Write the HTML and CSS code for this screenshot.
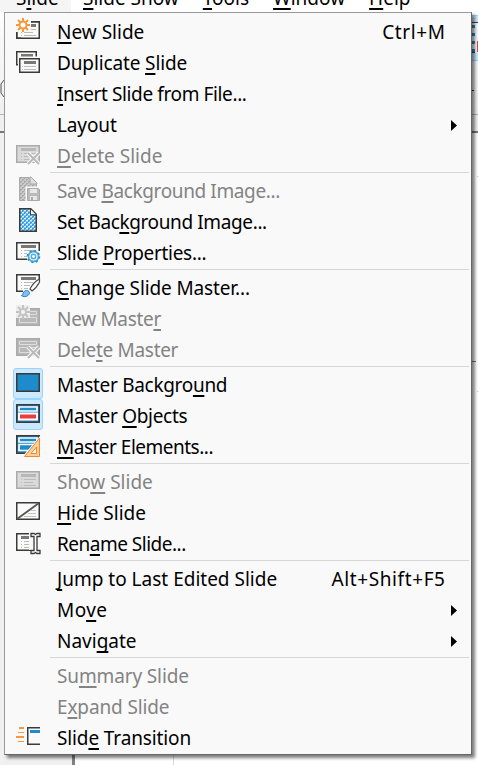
FILE: index.html
```
<!DOCTYPE html>
<html lang="en"><head><meta charset="utf-8"><title>Slide menu</title><link rel="stylesheet" href="styles.css"></head>
<body>
<div class="toolbar-edge"></div>
<div class="ruler-edge"></div>
<div class="workspace"><div class="panel"></div><div class="canvas"></div></div>
<svg class="behind" width="478" height="765" shape-rendering="crispEdges">
<rect x="467" y="15" width="11" height="46" fill="#cce8ff"/><path d="M467 15.5h11M467 60.5h11" stroke="#99d1ff"/>
<rect x="471" y="22" width="7" height="31" fill="#f3f8fc"/><path d="M471 22.5h7M471 52.5h4" stroke="#3a3a38"/><path d="M473.500 25v28" stroke="#1e8bcd" stroke-width="3" stroke-dasharray="3 5"/><rect x="477" y="41" width="1" height="11" fill="#ed3d3b"/>
<path d="M471 90.500h3" stroke="#222"/><path d="M477 176.500h1M477 391.500h1" stroke="#bbb"/><path d="M472 361.500h4" stroke="#777"/>
<path d="M4 80l-3 4v9l3 4" fill="none" stroke="#555" shape-rendering="auto"/>
</svg>
<nav class="menubar"><span class="active">S<u>l</u>ide</span><span><u>S</u>lide Show</span><span><u>T</u>ools</span><span><u>W</u>indow</span><span><u>H</u>elp</span></nav>
<main class="menu">
<div class="item"><i class="icon"><svg viewBox="0 0 24 24"><use href="#slide"/><path d="M0 0h15v14H0z" fill="#f9f9f9"/><path d="M.75 14v6.250H5M15 3.750h8" stroke="#3a3a38" stroke-width="1.500" fill="none"/><path d="M15 6h5v3h-5z" fill="#797774"/><path d="M7 0v14M0 7h14M2 2l10 10M12 2L2 12" stroke="#f7983d" stroke-width="2"/><circle cx="7" cy="7" r="3.500" fill="#fff" stroke="#f7983d" stroke-width="2"/></svg></i><span><u>N</u>ew Slide</span><span class="key">Ctrl+M</span></div>
<div class="item"><i class="icon"><svg viewBox="0 0 24 24"><path d="M.75 2.750h19.500v13H.75z" fill="#fafafa" stroke="#3a3a38" stroke-width="1.500"/><path d="M5 5h12v3H5z" fill="#797774"/><path d="M2 7.500h22V24H2z" fill="#f9f9f9"/><path d="M3.750 9.750h19.500v13.500H3.750z" fill="#fafafa" stroke="#3a3a38" stroke-width="1.500"/><path d="M8 12h12v3H8z" fill="#797774"/><path d="M6 17.500h1m1 0h12M6 20.500h1m1 0h12" stroke="#bbb"/></svg></i><span class="snug">Duplicate <u>S</u>lide</span></div>
<div class="item"><i class="icon"></i><span class="tighter"><u>I</u>nsert Slide from File...</span></div>
<div class="item"><i class="icon"></i><span class="snug">Layout</span><b class="arrow"></b></div>
<div class="item disabled"><i class="icon"><svg viewBox="0 0 24 24"><use href="#gslide"/><use href="#cross"/></svg></i><span><u>D</u>elete Slide</span></div>
<div class="separator"></div>
<div class="item disabled"><i class="icon"><svg viewBox="0 0 24 24"><path d="M3.500.5h11l6 6v17h-17z" fill="url(#gdots)" stroke="#aaa"/><path d="M14 0v7h7V6l-6-6z" fill="#ddd" stroke="#aaa"/><path d="M9.500 9.500H24V24H9.500z" fill="#f9f9f9"/><path d="M11.500 11.500h11l1 1v11h-12z" fill="#bbb" stroke="#aaa"/><path d="M14 12h7v4h-7zM14 19h7v4h-7z" fill="#e8e8e8"/><path d="M15 20h2v3h-2z" fill="#aaa"/></svg></i><span class="tighter">Save <u>B</u>ackground Image...</span></div>
<div class="item"><i class="icon"><svg viewBox="0 0 24 24"><path d="M3.750.75h11l5.500 5.500v17H3.750z" fill="url(#dots)" stroke="#3a3a38" stroke-width="1.500"/><path d="M14.500.75v6h6z" fill="#fafafa" stroke="#3a3a38"/></svg></i><span class="tighter">Set Bac<u>k</u>ground Image...</span></div>
<div class="item"><i class="icon"><svg viewBox="0 0 24 24"><use href="#slide"/><path d="M11 12h13v12H11z" fill="#f9f9f9"/><circle cx="17.500" cy="17.500" r="5" fill="#fff" stroke="#4fa8dc" stroke-width="1.800"/><circle cx="17.500" cy="17.500" r="6" fill="none" stroke="#1e8bcd" stroke-width="1.500" stroke-dasharray="2 2.700"/><circle cx="17.500" cy="17.500" r="2.200" fill="#fff" stroke="#4fa8dc" stroke-width="1.500"/></svg></i><span class="tight">Slide <u>P</u>roperties...</span></div>
<div class="separator"></div>
<div class="item"><i class="icon"><svg viewBox="0 0 24 24"><path d="M23.250 7V.75H.75v16.500H7" fill="#fafafa" stroke="#3a3a38" stroke-width="1.500"/><path d="M5 3h15v3H5z" fill="#797774"/><path d="M5 8.500h1m2 0h9M5 11.500h1m2 0h6M5 14.500h1m2 0h4" stroke="#bbb"/><path d="M23.500 5c-4 2-8 7-9.500 10l2 2c3-2 6-6 7.500-9z" fill="#fff" stroke="#4a4a48" stroke-width="1.200"/><path d="M5.500 21.500c2 0 1-5 5-5 3 0 4 3 1.500 5-2 1.500-5 1.500-6.500 0z" fill="#83beec" stroke="#1e7fc8"/></svg></i><span class="snug"><u>C</u>hange Slide Master...</span></div>
<div class="item disabled"><i class="icon"><svg viewBox="0 0 24 24"><use href="#gmaster"/><path d="M0 0h14v13H0z" fill="#eee"/><path d="M7 0v14M0 7h14M2 2l10 10M12 2L2 12" stroke="#c2c2c2" stroke-width="2"/><circle cx="7" cy="7" r="3" fill="#f5f5f5" stroke="#c6c6c6" stroke-width="2"/></svg></i><span class="tight">New Maste<u>r</u></span></div>
<div class="item disabled"><i class="icon"><svg viewBox="0 0 24 24"><g transform="translate(0 -1)"><use href="#gmaster"/></g><use href="#cross"/></svg></i><span class="tight">Dele<u>t</u>e Master</span></div>
<div class="separator"></div>
<div class="item checked"><i class="icon"><svg viewBox="0 0 24 24"><use href="#master"/></svg></i><span class="tight">Master Backgro<u>u</u>nd</span></div>
<div class="item checked"><i class="icon"><svg viewBox="0 0 24 24"><use href="#master"/><path d="M3 5h18v4H3z" fill="#1e8bcd" stroke="#fff" stroke-width="1.700"/><path d="M3 11.500h18v6H3z" fill="#ed3d3b" stroke="#fff" stroke-width="2"/></svg></i><span class="tight">Master <u>O</u>bjects</span></div>
<div class="item"><i class="icon"><svg viewBox="0 0 24 24"><use href="#master"/><path d="M3 5h18v4H3zM3 11.500h14v6H3z" fill="#1e8bcd" stroke="#fff" stroke-width="1.700"/><path d="M24 3v21H6z" fill="#f9f9f9"/><path d="M23.500 5v18.500H8.500z" fill="#fbd09a" stroke="#ee8a2c"/><path d="M20.500 14v6.500H15z" fill="#f9f9f9" stroke="#ee8a2c"/></svg></i><span class="tightest"><u>M</u>aster Elements...</span></div>
<div class="separator"></div>
<div class="item disabled"><i class="icon"><svg viewBox="0 0 24 24"><use href="#gslide"/></svg></i><span>Sho<u>w</u> Slide</span></div>
<div class="item"><i class="icon"><svg viewBox="0 0 24 24"><path d="M.75 3.750h22.500v16.500H.75z" fill="#fafafa" stroke="#3a3a38" stroke-width="1.500"/><path d="M15 11.500h5M12 14.500h8M8 17.500h12" stroke="#c4c4c4"/><path d="M1 20L23 4" stroke="#555" stroke-width="1.800"/></svg></i><span><u>H</u>ide Slide</span></div>
<div class="item"><i class="icon"><svg viewBox="0 0 24 24"><use href="#slide"/><path d="M13 2h11v22H16v-4h-3z" fill="#f9f9f9"/><path d="M15 3.500h3l1.500 1 1.500-1h3v3h-3v14h3v3h-3l-1.500-1-1.500 1h-3v-3h3v-14h-3z" fill="#fff" stroke="#3a3a38" stroke-width="1.300"/></svg></i><span class="tightest">Ren<u>a</u>me Slide...</span></div>
<div class="separator"></div>
<div class="item"><i class="icon"></i><span><u>J</u>ump to Last Edited Slide</span><span class="key">Alt+Shift+F5</span></div>
<div class="item"><i class="icon"></i><span class="loose">Mo<u>v</u>e</span><b class="arrow"></b></div>
<div class="item"><i class="icon"></i><span>Navi<u>g</u>ate</span><b class="arrow"></b></div>
<div class="separator"></div>
<div class="item disabled"><i class="icon"></i><span class="snug">Su<u>m</u>mary Slide</span></div>
<div class="item disabled"><i class="icon"></i><span class="snug">E<u>x</u>pand Slide</span></div>
<div class="item"><i class="icon"><svg viewBox="0 0 24 24"><path d="M24 3.750H11.750v16.500H24" fill="none" stroke="#3a3a38" stroke-width="1.500"/><path d="M14 6h10v3H14z" fill="#1e8bcd"/><path d="M3 4h5M0 13h8" stroke="#f7983d" stroke-width="2"/><path d="M2 8.500h6M2 17.500h6" stroke="#f7983d"/></svg></i><span class="snug">Slid<u>e</u> Transition</span></div>
</main>
<svg width="0" height="0" class="defs"><defs>
<pattern id="dots" width="4" height="4" patternUnits="userSpaceOnUse"><rect width="4" height="4" fill="#83c5ee"/><path d="M0 0h2v1H1v1H0zM2 2h2v1H3v1H2z" fill="#3b9cd8"/><path d="M2 0h2v1H2zM0 2h2v1H0z" fill="#d9effc"/></pattern>
<pattern id="gdots" width="4" height="4" patternUnits="userSpaceOnUse"><rect width="4" height="4" fill="#c8c8c8"/><path d="M0 0h2v1H1v1H0zM2 2h2v1H3v1H2z" fill="#aaa"/></pattern>
<g id="slide"><path d="M.75 3.750h22.500v16.500H.75z" fill="#fafafa" stroke="#3a3a38" stroke-width="1.500"/><path d="M5 6h15v3H5z" fill="#797774"/><path d="M5 11.500h1m2 0h12M5 14.500h1m2 0h9M5 17.500h1m2 0h12" stroke="#bbb"/></g>
<g id="gslide"><path d="M.75 3.750h22.500v16.500H.75z" fill="#dadada" stroke="#aaa" stroke-width="1.500"/><path d="M5 6h15v3H5z" fill="#b8b8b8"/><path d="M5 11.500h1m2 0h12M5 14.500h1m2 0h9M5 17.500h1m2 0h12" stroke="#bbb"/></g>
<g id="gmaster"><path d="M.75 3.750h22.500v16.500H.75z" fill="#b8b8b8" stroke="#aaa" stroke-width="1.500"/><path d="M3.500 6.500h17v3h-17zM3.500 12.500h17v5h-17z" fill="#b8b8b8" stroke="#ddd"/></g>
<g id="master"><path d="M.75 2.750h22.500v17.500H.75z" fill="#1e8bcd" stroke="#3a3a38" stroke-width="1.500"/></g>
<g id="cross"><path d="M12 11l11 11M23 11L12 22" stroke="#f9f9f9" stroke-width="4"/><path d="M12 11l11 11M23 11L12 22" stroke="#b9b9b9" stroke-width="2"/></g>
</defs></svg>
</body></html>
```
FILE: styles.css
```
*{box-sizing:border-box}
body{margin:0;width:478px;height:765px;overflow:hidden;position:relative;background:#fff;font:19px/31px "Noto Sans","Open Sans",sans-serif;color:#000;display:flex;flex-direction:column}
.toolbar-edge{height:115px;flex:none;background:linear-gradient(#fff 0,#fff 12px,#f8f8f8 40px,#f0f0f0 114px);border-bottom:1px solid #b5b5b5}
.ruler-edge{height:18px;flex:none;background:#f0f0f0;border-bottom:2px solid #777}
.workspace{flex:1;display:flex}
.panel{width:75px;background:#f0f0f0;border-right:3px solid #808080}
.canvas{width:99px;border-right:1px solid #d8d8d8}
.behind{position:absolute;left:0;top:0}
.defs{position:absolute}
.menubar{position:absolute;left:0;top:-17px;display:flex;height:29px;width:478px;white-space:nowrap}
.menubar span{padding:0 12px;line-height:31px}
.menubar .active{background:#f5f5f5;width:71px;padding-left:16px;padding-right:0}
u{text-decoration:underline;text-decoration-thickness:2px;text-underline-offset:3px;text-decoration-skip-ink:none}
.menu{position:absolute;left:4px;top:12px;width:468px;height:743px;background:#f9f9f9;border:1px solid #999;border-right-color:#666;border-bottom-color:#666;padding-top:4px;box-shadow:3px 3px 3px rgba(0,0,0,.5)}
.item{height:31px;display:flex;align-items:center;padding:0 26px 0 8px;white-space:pre}
.icon{width:30px;height:31px;margin:-4px 14px 0 0;flex:none;padding:3px;border:0 solid #99d1ff}
.icon svg{display:block;width:24px;height:24px;overflow:visible}
.checked .icon{background:#cce8ff;border-width:1px;border-radius:3px;padding:2px}
.key{margin-left:auto;margin-right:-.6px;letter-spacing:.6px}
.loose{letter-spacing:.4px}
.snug{letter-spacing:-.13px}
.tight{letter-spacing:-.31px}
.tighter{letter-spacing:-.38px}
.tightest{letter-spacing:-.5px}
.disabled{color:#838383}
.arrow{margin-left:auto;margin-right:-12px;width:6px;height:11px;background:#000;clip-path:polygon(0 0,100% 50%,0 100%)}
.separator{height:4px;margin:0 2px 0 45px;border-top:1px solid #d7d7d7}
```
